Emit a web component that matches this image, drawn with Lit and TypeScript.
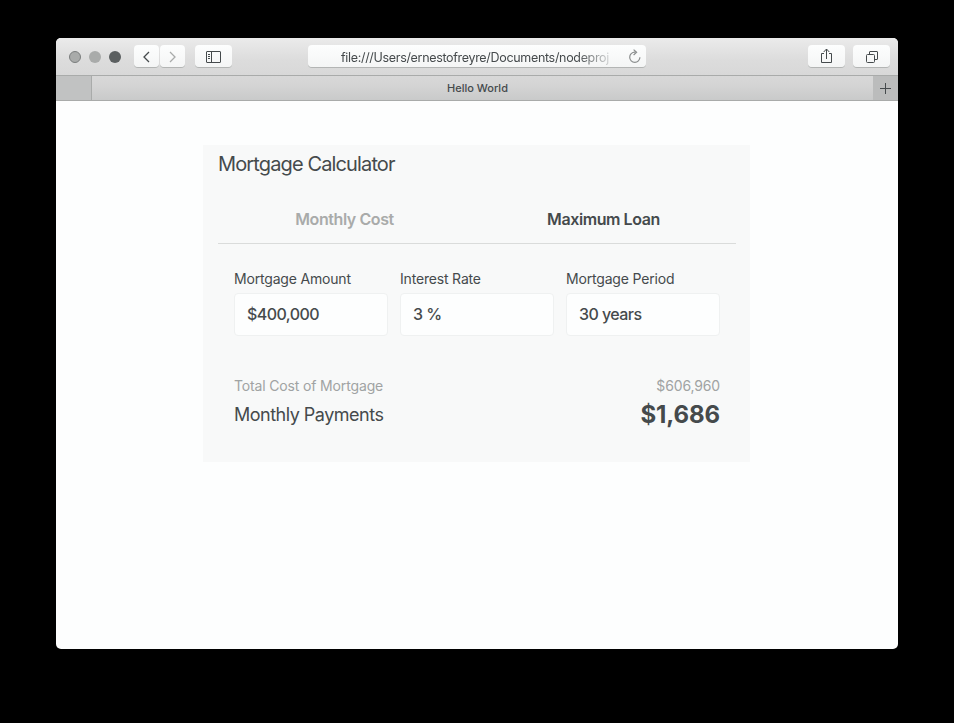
import { LitElement, html, css } from "lit";
import { customElement, property } from "lit/decorators.js";

@customElement("browser-toolbar")
class BrowserToolbar extends LitElement {
  static styles = css`
    :host { display: block; }
    .bar {
      box-sizing: border-box; height: 38px; display: flex; align-items: flex-start;
      padding: 7px 8px 0 13px; border-bottom: 1px solid #a9abaa;
      background: linear-gradient(#ebebeb, #dcdcdc 60%, #d8d8d8);
    }
    .lights { display: flex; gap: 8px; margin: 6px 13px 0 0; }
    .light { width: 12px; height: 12px; border-radius: 50%; background: #a9abaa; box-sizing: border-box; }
    .light.close { border: 1px solid #7b7e7e; }
    .light.zoom { background: #5b5f60; }
    .btn {
      height: 22px; width: 37px; border-radius: 4px; background: linear-gradient(#fdfefe, #f4f5f5);
      box-shadow: 0 1px 0 #b3b5b4; display: flex; align-items: center; justify-content: center;
    }
    .btn.nav { width: 25px; }
    .btn.fwd { margin: 0 10px 0 1px; }
    .url {
      width: 338px; height: 22px; margin: 0 162px 0 76px; border-radius: 4px;
      background: linear-gradient(#fdfefe, #f4f5f5); box-shadow: 0 1px 0 #b3b5b4;
      display: flex; align-items: center; box-sizing: border-box; padding: 3px 5px 0 33px;
    }
    .address {
      width: 274px; flex: none; white-space: nowrap; font-size: 12.5px; line-height: 18px;
      letter-spacing: -0.32px; color: #454a4c;
      -webkit-mask-image: linear-gradient(90deg, #000 236px, transparent 276px);
      mask-image: linear-gradient(90deg, #000 236px, transparent 276px);
    }
    .reload { margin: -1px 0 0 13px; flex: none; }
    .share { margin-right: 8px; }
    svg { display: block; fill: none; stroke: #454a4c; }
    .dim { stroke: #a9abaa; }
    .reload { stroke: #8b8e8e; }
  `;
  render() {
    return html`<div class="bar">
      <div class="lights">
        <span class="light close"></span><span class="light"></span><span class="light zoom"></span>
      </div>
      <div class="btn nav"><svg width="25" height="22" stroke-width="1.3"><path d="M15 7 L10 12 L15 17" /></svg></div>
      <div class="btn nav fwd"><svg class="dim" width="25" height="22" stroke-width="1.3"><path d="M10 7 L15 12 L10 17" /></svg></div>
      <div class="btn"><svg width="37" height="22"><rect x="11.5" y="6.5" width="14" height="11" rx=".5" /><path d="M16.5 6.5V17.5M13 9.5H15M13 11.5H15M13 13.5H15" /></svg></div>
      <div class="url">
        <div class="address">file:///Users/ernestofreyre/Documents/nodeproj</div>
        <svg class="reload" width="14" height="16" stroke-width="1.2"><path d="M7.5 3.2 H6.8 A5.1 5.1 0 1 0 11.9 8.3 M5.6 .6 L8.6 3.3 L5.6 6" /></svg>
      </div>
      <div class="btn share"><svg width="37" height="22"><path d="M16 8.5H13.5V17.5H23.5V8.5H21M18.5 14V4M15.7 7L18.5 4L21.3 7" /></svg></div>
      <div class="btn"><svg width="37" height="22"><rect x="13.5" y="9.5" width="8" height="8" rx="1" /><path d="M16.5 9.5V7Q16.5 6.5 17 6.5H24Q24.5 6.5 24.5 7V14Q24.5 14.5 24 14.5H21.5" /></svg></div>
    </div>`;
  }
}

@customElement("tab-strip")
class TabStrip extends LitElement {
  static styles = css`
    :host { display: block; }
    .strip { height: 25px; box-sizing: border-box; display: flex; border-bottom: 1px solid #a9abaa; }
    .edge { width: 36px; box-sizing: border-box; background: #c1c2c2; border-right: 1px solid #a9abaa; }
    .tab {
      flex: 1; text-align: center; font-size: 11px; font-weight: 500; line-height: 24px; color: #454a4c;
      background: linear-gradient(#d8d8d8, #d4d4d4 40%, #c9caca); padding-right: 10px;
    }
    .add { width: 25px; background: #bbbcbc; }
    svg { display: block; stroke: #454a4c; }
  `;
  render() {
    return html`<div class="strip">
      <div class="edge"></div>
      <div class="tab">Hello World</div>
      <div class="add"><svg width="25" height="24"><path d="M12.5 7V18M7 12.5H18" /></svg></div>
    </div>`;
  }
}

@customElement("loan-field")
class LoanField extends LitElement {
  @property() label = "";
  @property() value = "";
  static styles = css`
    :host { display: block; }
    .label { font-size: 14px; line-height: 18px; height: 23px; letter-spacing: -0.18px; color: #454a4c; white-space: nowrap; }
    .box {
      height: 43px; box-sizing: border-box; border: 1px solid #eff1f1; border-radius: 4px; background: #fdfefe;
      padding-left: 12px; font-size: 16px; font-weight: 500; line-height: 41px; letter-spacing: -0.55px; color: #454a4c;
    }
  `;
  render() {
    return html`<div class="label">${this.label}</div><div class="box">${this.value}</div>`;
  }
}

@customElement("mortgage-calculator")
class MortgageCalculator extends LitElement {
  static styles = css`
    :host { display: block; }
    .card {
      width: 547px; height: 317px; box-sizing: border-box; margin: 44px 0 0 147px; padding: 7px 14px 0 15px;
      background: #f8f9f9; color: #454a4c;
    }
    .title { font-size: 20px; line-height: 24px; letter-spacing: -0.87px; }
    .tabs {
      display: grid; grid-template-columns: 253px 1fr; height: 68px; box-sizing: border-box;
      padding-top: 30px; border-bottom: 1px solid #dadcdb; text-align: center;
      font-size: 16px; font-weight: 600; line-height: 26px; letter-spacing: -0.42px;
    }
    .idle { color: #a9abaa; }
    .fields { display: grid; grid-template-columns: repeat(3, 154px); gap: 12px; padding: 26px 0 0 16px; }
    .row { display: flex; justify-content: space-between; align-items: center; padding: 0 16px; }
    .total { margin-top: 40px; height: 18px; font-size: 14px; letter-spacing: -0.15px; color: #a0a3a3; }
    .monthly { height: 40px; font-size: 18px; letter-spacing: -0.5px; }
    .amount { font-size: 24px; font-weight: 700; letter-spacing: -0.1px; }
  `;
  render() {
    return html`<div class="card">
      <div class="title">Mortgage Calculator</div>
      <div class="tabs"><span class="idle">Monthly Cost</span><span>Maximum Loan</span></div>
      <div class="fields">
        <loan-field label="Mortgage Amount" value="$400,000"></loan-field>
        <loan-field label="Interest Rate" value="3 %"></loan-field>
        <loan-field label="Mortgage Period" value="30 years"></loan-field>
      </div>
      <div class="row total"><span>Total Cost of Mortgage</span><span>$606,960</span></div>
      <div class="row monthly"><span>Monthly Payments</span><span class="amount">$1,686</span></div>
    </div>`;
  }
}

@customElement("app-root")
class AppRoot extends LitElement {
  static styles = css`
    :host {
      display: block; box-sizing: border-box; width: 954px; height: 723px; padding: 38px 56px 74px;
      background: #000; font-family: Inter, "Liberation Sans", sans-serif;
    }
    .window { height: 611px; background: #fdfefe; border-radius: 5px; overflow: hidden; display: flow-root; }
  `;
  render() {
    return html`<div class="window">
      <browser-toolbar></browser-toolbar>
      <tab-strip></tab-strip>
      <mortgage-calculator></mortgage-calculator>
    </div>`;
  }
}
